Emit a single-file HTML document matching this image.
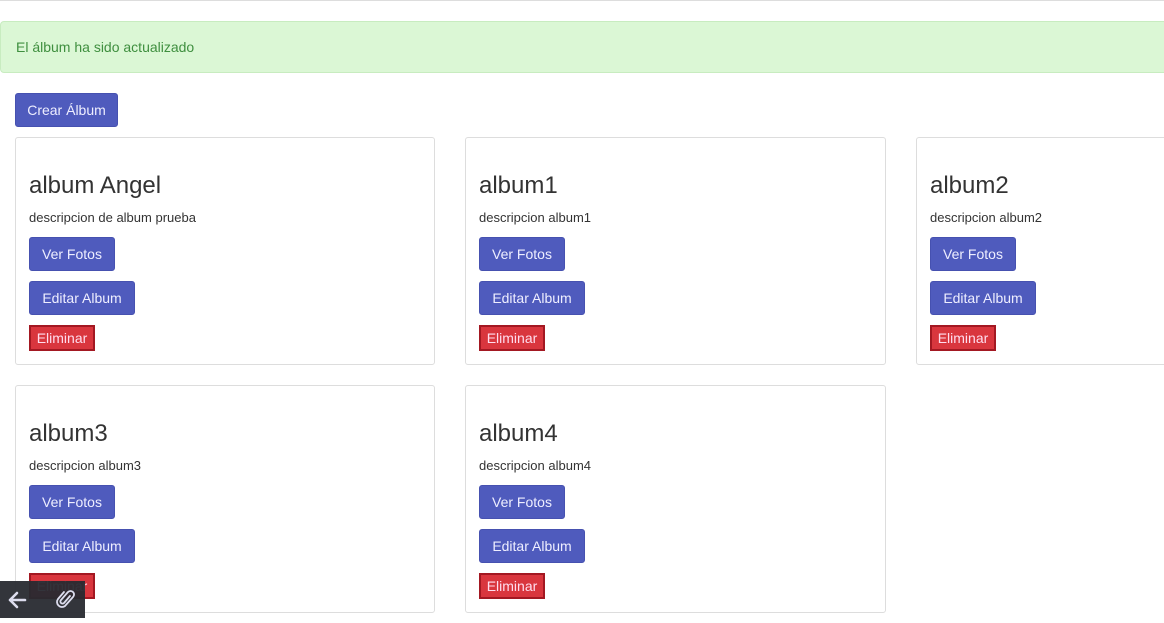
<!DOCTYPE html>
<html><head><meta charset="utf-8"><style>
*{box-sizing:border-box;margin:0;padding:0}
body{width:1164px;height:618px;overflow:hidden;background:#fff;font-family:"Liberation Sans",sans-serif;color:#333;position:relative}
.top{position:absolute;left:0;top:0;width:1164px;height:1px;background:#ddd}
.alert{position:absolute;left:0;top:21px;width:1170px;height:52px;background:#dbf7d5;border:1px solid #c8ecc0;border-radius:4px;color:#3f8f3f;font-size:14px;padding:17px 15px}
.btn{position:absolute;background:#4f5bbd;color:#eef;font-size:14px;border-radius:3px;border:1px solid #4651b0;text-align:center;line-height:32px;height:34px}
.card{position:absolute;width:421px;height:228px;border:1px solid #ddd;border-radius:3px;background:#fff}
.card h2{position:absolute;left:13px;top:34px;font-size:24px;font-weight:normal;color:#333}
.card p{position:absolute;left:13px;top:72px;font-size:13px;color:#333}
.card .v{left:13px;top:99px;width:86px}
.card .e{left:13px;top:143px;width:106px}
.card .d{position:absolute;left:13px;top:187px;width:66px;height:26px;background:#d9363e;border:2px solid #a31822;color:#fde;font-size:14px;line-height:22px;text-align:center}
.bar{position:absolute;left:0;top:581px;width:85px;height:37px;background:rgba(40,42,48,.95)}
</style></head><body>
<div class="top"></div>
<div class="alert">El álbum ha sido actualizado</div>
<div class="btn" style="left:15px;top:93px;width:103px">Crear Álbum</div>

<div class="card" style="left:15px;top:137px;width:420px"><h2>album Angel</h2><p>descripcion de album prueba</p><div class="btn v">Ver Fotos</div><div class="btn e">Editar Album</div><div class="d">Eliminar</div></div>
<div class="card" style="left:465px;top:137px"><h2>album1</h2><p>descripcion album1</p><div class="btn v">Ver Fotos</div><div class="btn e">Editar Album</div><div class="d">Eliminar</div></div>
<div class="card" style="left:916px;top:137px"><h2>album2</h2><p>descripcion album2</p><div class="btn v">Ver Fotos</div><div class="btn e">Editar Album</div><div class="d">Eliminar</div></div>
<div class="card" style="left:15px;top:385px;width:420px"><h2>album3</h2><p>descripcion album3</p><div class="btn v">Ver Fotos</div><div class="btn e">Editar Album</div><div class="d">Eliminar</div></div>
<div class="card" style="left:465px;top:385px"><h2>album4</h2><p>descripcion album4</p><div class="btn v">Ver Fotos</div><div class="btn e">Editar Album</div><div class="d">Eliminar</div></div>

<div class="bar">
<svg width="85" height="37" viewBox="0 0 85 37">
<path d="M25 19H10M17 12l-7 7 7 7" stroke="#dde" stroke-width="2.6" fill="none" stroke-linecap="round" stroke-linejoin="round"/>
<path d="M70 15l-6 7a2 2 0 0 1-3-3l7-8a3.5 3.5 0 0 1 5 5l-8 9a5 5 0 0 1-7-7l6-7" stroke="#dde" stroke-width="1.8" fill="none" stroke-linecap="round"/>
</svg>
</div>
</body></html>
